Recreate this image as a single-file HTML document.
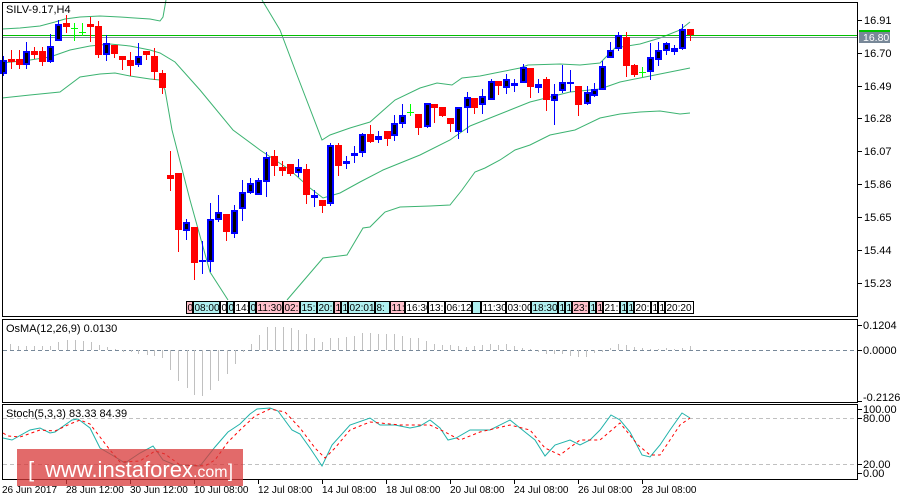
<!DOCTYPE html>
<html><head><meta charset="utf-8"><style>
html,body{margin:0;padding:0;background:#fff;width:900px;height:500px;overflow:hidden}
svg{display:block;font-family:"Liberation Sans",sans-serif;font-size:11px}
</style></head><body>
<svg id="s" width="900" height="500" xmlns="http://www.w3.org/2000/svg">
<rect width="900" height="500" fill="#fff"/>
<g id="bands" fill="none" stroke="#3cb371" stroke-width="1">
<polyline points="2,29 20,28 40,26 55,22 65,19 80,17 100,16 120,17 150,19 160,21 163,17 166,0"/>
<polyline points="262,0 280,30 297,75 322,140 330,135 350,128 370,122 395,100 420,88 437,83 452,85 462,78 480,76 500,72 520,68 528,65 560,64 580,65 600,63 615,48 640,44 660,38 680,30 690,22"/>
<polyline points="2,63 30,60 50,57 70,50 90,46 110,44 130,46 150,50 160,53 175,62 200,90 233,130 260,150 290,170 310,188 323,198 340,193 360,182 383,170 420,155 450,140 470,126 490,118 510,110 530,102 550,97 570,92 590,90 600,89 620,82 640,78 660,74 690,68"/>
<polyline points="2,98 30,95 60,92 80,77 100,74 115,73 130,76 150,79 160,80 165,90 172,130 190,200 210,272 228,300"/>
<polyline points="287,300 323,258 347,255 363,228 370,227 385,212 400,207 430,206 450,205 462,190 475,172 485,168 500,160 515,150 530,145 550,135 575,130 600,118 620,114 640,112 660,111 680,114 690,113"/>
</g>
<line x1="2" y1="35.5" x2="858" y2="35.5" stroke="#00c000"/>
<line x1="2" y1="37.5" x2="858" y2="37.5" stroke="#8090a0"/>
<g id="candles"></g>
<g id="tl"></g>
<rect x="2.5" y="2.5" width="855" height="314" fill="none" stroke="#000"/>
<rect x="2.5" y="319.5" width="855" height="83" fill="none" stroke="#000"/>
<rect x="2.5" y="404.5" width="855" height="75" fill="none" stroke="#000"/>
<text x="6" y="13" fill="#000">SILV-9.17,H4</text>
<g fill="#000">
<text x="864" y="24">16.91</text>
<text x="864" y="57">16.70</text>
<text x="864" y="90">16.49</text>
<text x="864" y="122">16.28</text>
<text x="864" y="155">16.07</text>
<text x="864" y="188">15.86</text>
<text x="864" y="221">15.65</text>
<text x="864" y="254">15.44</text>
<text x="864" y="287">15.23</text>
</g>
<g stroke="#000"><line x1="858" y1="20.5" x2="862" y2="20.5"/><line x1="858" y1="53.5" x2="862" y2="53.5"/><line x1="858" y1="86.5" x2="862" y2="86.5"/><line x1="858" y1="118.5" x2="862" y2="118.5"/><line x1="858" y1="151.5" x2="862" y2="151.5"/><line x1="858" y1="184.5" x2="862" y2="184.5"/><line x1="858" y1="217.5" x2="862" y2="217.5"/><line x1="858" y1="250.5" x2="862" y2="250.5"/><line x1="858" y1="283.5" x2="862" y2="283.5"/>
<line x1="858" y1="325.5" x2="862" y2="325.5"/><line x1="858" y1="350.5" x2="862" y2="350.5"/><line x1="858" y1="401.5" x2="862" y2="401.5"/>
<line x1="858" y1="409.5" x2="862" y2="409.5"/><line x1="858" y1="418.5" x2="862" y2="418.5"/><line x1="858" y1="464.5" x2="862" y2="464.5"/><line x1="858" y1="473.5" x2="862" y2="473.5"/></g>
<rect x="859" y="30" width="31" height="2" fill="#00c000"/>
<rect x="859" y="32" width="31" height="11" fill="#788898"/>
<text x="863" y="41" fill="#fff" font-size="10.5">16.80</text>
<line x1="3" y1="350.5" x2="857" y2="350.5" stroke="#778899" stroke-dasharray="4,3"/>
<g id="osma" stroke="#c0c0c0"></g>
<text x="6" y="332" fill="#000">OsMA(12,26,9) 0.0130</text>
<text x="863" y="329" fill="#000">0.1204</text>
<text x="863" y="354" fill="#000">0.0000</text>
<text x="863" y="401" fill="#000">-0.2126</text>
<line x1="3" y1="418.5" x2="857" y2="418.5" stroke="#c0c0c0" stroke-dasharray="4,3"/>
<line x1="3" y1="464.5" x2="857" y2="464.5" stroke="#c0c0c0" stroke-dasharray="4,3"/>
<polyline fill="none" stroke="#20b2aa" points="3,438 12,440 30,430 40,428 50,433 55,432 72,420 78,419 90,428 100,448 112,455 125,463 140,453 153,446 163,460 175,465 200,466 215,447 228,432 240,424 250,414 257,409 270,408 278,411 292,430 300,434 310,448 322,466 332,445 350,425 370,418 380,425 395,425 410,428 420,426 430,420 440,428 448,440 456,438 470,430 490,430 510,420 525,432 535,440 545,456 555,445 570,440 580,445 590,440 600,430 611,415 620,420 630,432 642,455 650,457 660,445 670,430 682,413 690,418"/>
<polyline fill="none" stroke="#ff0000" stroke-dasharray="3,3" points="3,433 8,436 20,437 40,430 55,431 70,424 80,420 90,424 100,437 110,450 120,462 140,461 155,451 165,454 180,465 205,466 215,460 228,442 240,430 255,416 270,409 285,412 300,428 315,448 325,458 335,448 350,430 370,422 400,425 430,425 445,432 460,440 480,432 510,425 530,430 545,448 560,455 580,440 600,440 620,423 638,445 650,455 660,455 670,440 680,425 690,418"/>
<text x="6" y="417" fill="#000">Stoch(5,3,3) 83.33 84.39</text>
<text x="863" y="413" fill="#000">100.00</text>
<text x="863" y="422" fill="#000">80.00</text>
<text x="863" y="468" fill="#000">20.00</text>
<text x="863" y="477" fill="#000">0.00</text>
<g stroke="#000"><line x1="66.5" y1="480" x2="66.5" y2="484"/><line x1="130.5" y1="480" x2="130.5" y2="484"/><line x1="194.5" y1="480" x2="194.5" y2="484"/><line x1="258.5" y1="480" x2="258.5" y2="484"/><line x1="322.5" y1="480" x2="322.5" y2="484"/><line x1="386.5" y1="480" x2="386.5" y2="484"/><line x1="450.5" y1="480" x2="450.5" y2="484"/><line x1="514.5" y1="480" x2="514.5" y2="484"/><line x1="578.5" y1="480" x2="578.5" y2="484"/><line x1="642.5" y1="480" x2="642.5" y2="484"/></g>
<g fill="#000" font-size="10">
<text x="2" y="493">26 Jun 2017</text>
<text x="66" y="493">28 Jun 12:00</text>
<text x="130" y="493">30 Jun 12:00</text>
<text x="194" y="493">10 Jul 08:00</text>
<text x="258" y="493">12 Jul 08:00</text>
<text x="322" y="493">14 Jul 08:00</text>
<text x="386" y="493">18 Jul 08:00</text>
<text x="450" y="493">20 Jul 08:00</text>
<text x="514" y="493">24 Jul 08:00</text>
<text x="578" y="493">26 Jul 08:00</text>
<text x="642" y="493">28 Jul 08:00</text>
</g>
<rect x="17" y="449" width="226" height="37" fill="#d83838" opacity="0.75"/>
<text x="28" y="477" fill="#fff" font-size="22">[</text>
<text x="45" y="477" fill="#fff" font-size="22">www.instaforex<tspan font-size="16">.com</tspan></text>
<text x="228" y="477" fill="#fff" font-size="18">]</text>
</svg>
<script>
var NS="http://www.w3.org/2000/svg";
function el(p,t,a){var e=document.createElementNS(NS,t);for(var k in a)e.setAttribute(k,a[k]);p.appendChild(e);return e;}
var C=[[3,60,73,56,75,'b'],[11,59,61,50,68,'r'],[19,59,64,50,68,'r'],[26,51,64,42,68,'b'],[34,51,54,47,58,'r'],[42,51,61,47,65,'r'],[50,46,61,34,62,'b'],[58,24,40,20,40,'b'],[66,23,26,15,32,'r'],[74,28,28,23,41,'g'],[82,32,32,23,36,'g'],[90,24,26,17,41,'r'],[98,26,54,21,57,'r'],[106,43,54,35,60,'b'],[114,45,53,45,57,'r'],[122,56,59,56,69,'r'],[130,60,65,52,75,'r'],[138,56,64,43,66,'b'],[146,51,54,51,59,'r'],[154,56,71,48,79,'r'],[162,73,87,70,93,'r'],
[170,175,178,151,190,'r'],[178,173,229,173,251,'r'],[186,222,230,219,239,'b'],[194,227,262,227,279,'r'],[202,260,261,241,273,'b'],[210,219,261,203,271,'b'],[218,212,219,195,221,'b'],[226,214,231,214,240,'r'],[234,210,233,205,237,'b'],[242,192,208,180,220,'b'],[250,183,192,178,193,'b'],[258,180,194,178,194,'b'],[266,157,181,152,196,'b'],[274,156,165,150,175,'r'],[282,167,170,161,175,'r'],[290,164,173,164,175,'r'],[298,167,172,159,176,'b'],[306,169,194,164,203,'r'],[314,195,197,190,206,'b'],[322,200,205,200,212,'r'],[330,145,203,143,205,'b'],[338,145,165,143,175,'r'],[346,161,163,156,168,'b'],[354,153,155,146,162,'b'],[362,134,152,133,156,'b'],[370,134,141,125,142,'r'],[378,136,139,131,142,'b'],[387,131,138,131,145,'r'],[394,123,135,115,140,'b'],[402,115,123,104,127,'b'],[410,112,112,104,116,'g'],[418,114,127,114,134,'r'],[427,103,126,103,127,'b'],[434,104,107,104,122,'r'],[442,107,115,107,116,'r'],[450,118,123,118,131,'r'],[458,107,131,107,138,'b'],[467,97,107,92,132,'b'],[474,98,107,98,113,'r'],[482,96,104,89,113,'b'],[491,81,99,79,99,'b'],[498,81,85,81,94,'r'],[506,79,87,74,93,'b'],[514,83,85,79,91,'b'],[523,67,82,64,82,'b'],[530,68,86,68,97,'r'],[538,84,87,79,92,'b'],[546,79,99,77,110,'r'],[554,94,100,84,124,'b'],[562,82,90,65,92,'b'],[570,82,83,70,91,'b'],[578,86,104,86,115,'r'],[587,92,103,86,104,'b'],[594,89,95,83,96,'b'],[602,66,89,61,89,'b'],[610,50,57,42,57,'b'],[618,35,48,32,50,'b'],[626,37,65,32,76,'r'],[634,65,74,64,76,'r'],[642,72,72,67,77,'g'],[650,57,71,43,79,'b'],[658,50,59,42,65,'b'],[666,43,50,42,54,'b'],[674,48,51,45,54,'b'],[682,29,48,24,49,'b'],[690,29,34,29,40,'r']];
var g=document.getElementById('candles');
C.forEach(function(c){var x=c[0],t=c[5];
 if(t=='g'){el(g,'line',{x1:x+.5,x2:x+.5,y1:c[3],y2:c[4],stroke:'#00ff00'});el(g,'line',{x1:x-3,x2:x+4,y1:c[1]+.5,y2:c[1]+.5,stroke:'#00ff00'});return;}
 var col=t=='b'?'#0000ff':'#ff0000';
 el(g,'line',{x1:x+.5,x2:x+.5,y1:c[3],y2:c[4]+1,stroke:col});
 var h=Math.max(c[2]-c[1],1);
 if(t=='b'){ if(h<=2){el(g,'rect',{x:x-3,y:c[1],width:7,height:h+1,fill:col});}
  else{el(g,'rect',{x:x-3,y:c[1],width:7,height:h+1,fill:col});el(g,'rect',{x:x-1,y:c[1]+2,width:3,height:Math.max(h-3,0),fill:'#000'});}}
 else el(g,'rect',{x:x-3,y:c[1],width:7,height:h+1,fill:col});
});
var O=[[10,344],[18,346],[26,346],[34,346],[42,346],[50,346],[58,342],[67,340],[75,340],[83,341],[91,342],[99,345],[107,347],[115,349],[123,352],[131,352],[138,354],[147,355],[154,356],[162,358],[170,370],[178,381],[187,388],[194,395],[202,396],[210,390],[218,381],[227,374],[235,364],[243,352],[251,344],[259,335],[267,327],[275,327],[283,327],[291,328],[298,330],[306,334],[314,338],[322,342],[330,338],[338,338],[346,337],[354,336],[362,333],[370,333],[378,334],[386,334],[394,334],[402,336],[410,338],[418,338],[426,341],[434,344],[442,345],[450,345],[458,346],[466,347],[474,346],[482,345],[490,344],[498,345],[506,344],[514,346],[522,348],[530,349],[538,352],[546,354],[554,354],[562,354],[570,356],[578,357],[586,357],[594,353],[602,352],[610,348],[618,344],[626,345],[634,347],[642,348],[650,349],[658,349],[666,348],[674,349],[682,348],[690,346]];
var og=document.getElementById('osma');
O.forEach(function(o){el(og,'line',{x1:o[0]+.5,x2:o[0]+.5,y1:350,y2:o[1]});});
var L=[['0','p',6],['08:00','c',26],['0','w',6],['0','c',6],['14:','w',14],['0','c',6],['11:30','p',26],['02:','p',16],['15:','c',16],['20:','c',16],['1','p',6],['1','c',6],['02:01','c',26],['8:','c',14],['11:','p',14],['16:30','w',22],['13:','w',16],['06:12','w',26],['','c',8],['11:30','w',24],['03:00','w',24],['18:30','c',26],['1','c',6],['1','c',6],['23:','p',16],['1','c',6],['1','p',6],['21:','w',16],['1','c',6],['1','c',6],['20:','w',16],['1','w',6],['1','w',6],['20:20','w',28]];
var tl=document.getElementById('tl');var x=186;
L.forEach(function(l){var f=l[1]=='p'?'#ffc0cb':l[1]=='c'?'#b0f0f0':'#fff';
 el(tl,'rect',{x:x+.5,y:301.5,width:l[2],height:12,fill:f,stroke:'#000'});
 var t=el(tl,'text',{x:x+1.5,y:311,fill:'#000','font-size':'10'});t.textContent=l[0];x+=l[2]+1;});
</script>
</body></html>
